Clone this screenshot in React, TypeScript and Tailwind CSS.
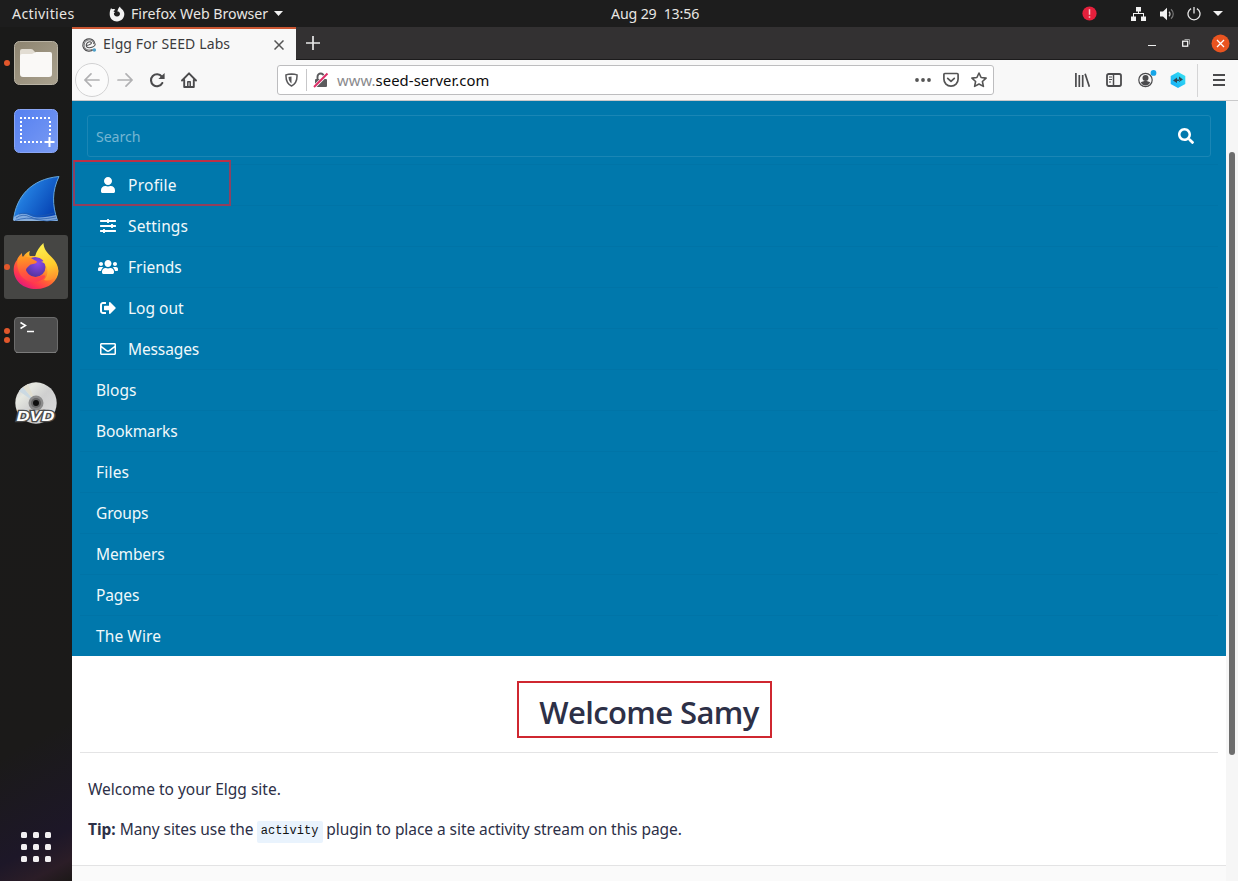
import type { ReactNode } from "react";
import { FaUser, FaSlidersH, FaUsers, FaSignOutAlt, FaRegEnvelope, FaSearch } from "react-icons/fa";

const menu: { label: string; icon?: ReactNode; spacing?: string }[] = [
  { label: "Profile", icon: <FaUser size={16} />, spacing: "tracking-[0.28px]" },
  { label: "Settings", icon: <FaSlidersH size={16} />, spacing: "tracking-[0.14px]" },
  { label: "Friends", icon: <FaUsers size={20} /> },
  { label: "Log out", icon: <FaSignOutAlt size={16} /> },
  { label: "Messages", icon: <FaRegEnvelope size={16} />, spacing: "tracking-[-0.12px]" },
  { label: "Blogs" },
  { label: "Bookmarks", spacing: "tracking-[-0.1px]" },
  { label: "Files", spacing: "tracking-[0.2px]" },
  { label: "Groups", spacing: "tracking-[-0.15px]" },
  { label: "Members", spacing: "tracking-[-0.12px]" },
  { label: "Pages", spacing: "tracking-[-0.1px]" },
  { label: "The Wire", spacing: "tracking-[0.1px]" },
];

function TopBar() {
  return (
    <header className="flex h-[27px] shrink-0 items-center bg-[#1d1d1d] text-[14.2px] text-[#e8e6e3]">
      <div className="w-[109px] shrink-0 pl-3 tracking-[0.35px]">Activities</div>
      <svg className="h-4 w-4 shrink-0" viewBox="0 0 16 16">
        <path
          fill="#f2f2f2"
          d="M2.1 2.1C2.5 2.5 2.8 3 3 3.3 3.700 2.900 4.600 2.900 5.300 3.100L6.400 3.900C5.500 4.300 4.800 4.700 4.400 5.300L6 6.200 4.900 7.200C4.700 8.900 6 10.400 7.900 10.500 10 10.600 11.300 9 10.900 7.300 10.600 6 9.500 5.400 8.400 5.500 8.700 3.600 9.500 1.500 11 .4 11.100 1.700 12 2.200 13 3.200 14.500 4.600 15.500 6.400 15.300 8.600 15 12.600 12 15.400 8 15.400 3.900 15.400.9 12.500.7 8.500.6 6.100 1.100 3.800 2.100 2.100Z"
        />
      </svg>
      <div className="w-[149px] shrink-0 pl-1.5 whitespace-nowrap">Firefox Web Browser</div>
      <svg className="h-[5px] w-[9px] shrink-0" viewBox="0 0 9 5">
        <path d="M0 0h9L4.500 5z" fill="#f2f2f2" />
      </svg>
      <div className="ml-[328px] w-[471px] shrink-0 tracking-[-0.15px] whitespace-pre">Aug 29  13:56</div>
      <svg className="h-[15px] w-[15px] shrink-0" viewBox="0 0 15 15">
        <circle cx="7.500" cy="7.500" r="7.100" fill="#e5203c" />
        <path d="M7.500 3.200v5.600M7.500 10.300v1.500" stroke="#fbc3cb" strokeWidth="1.500" />
      </svg>
      <svg className="ml-[34px] h-[14px] w-[15px] shrink-0" viewBox="0 0 15 14" fill="#f2f2f2">
        <path d="M5 0h5v4.500H8V6h5v3.500h2V14h-5V9.500h2V7H3v2.500h2V14H0V9.500h2V6h5V4.500H5z" />
      </svg>
      <svg className="ml-[14px] h-[14px] w-[15px] shrink-0" viewBox="0 0 15 14">
        <path d="M0 4.500h3L7 .8v12.400L3 9.500H0z" fill="#f2f2f2" />
        <path d="M9 4.700c1.300 1.200 1.300 3.400 0 4.600" fill="none" stroke="#ccc" strokeWidth="1.300" />
        <path d="M11 2.200c3 2.700 3 6.900 0 9.600" fill="none" stroke="#777" strokeWidth="1.200" />
      </svg>
      <svg className="ml-[12px] h-[14px] w-[14px] shrink-0" viewBox="0 0 14 14" fill="none" stroke="#e8e8e8" strokeWidth="1.300">
        <path d="M7 0v6.500M4.100 1.600a6 6 0 1 0 5.800 0" />
      </svg>
      <svg className="ml-[12px] h-[5px] w-[10px] shrink-0" viewBox="0 0 10 5">
        <path d="M0 0h10L5 5z" fill="#f2f2f2" />
      </svg>
    </header>
  );
}

function DockItem({ dots = 0, active = false, children }: { dots?: number; active?: boolean; children: ReactNode }) {
  return (
    <div className={active ? "relative flex h-16 w-16 items-center justify-center rounded-[3px] bg-[#464644]" : "relative flex h-16 w-16 items-center justify-center"}>
      {dots > 0 && (
        <div className="absolute inset-y-0 left-0 flex flex-col items-center justify-center gap-[3px]">
          {Array.from({ length: dots }, (_, i) => (
            <span key={i} className="h-1.5 w-1.5 rounded-full bg-[#e2572b]" />
          ))}
        </div>
      )}
      {children}
    </div>
  );
}

function Dock() {
  return (
    <aside className="flex w-[72px] shrink-0 flex-col items-center justify-between bg-[linear-gradient(152deg,#1a1a19_0%,#1b1a19_82%,#1d1728_94%,#2b1d27_97.500%,#1c1817_100%)] pt-1 pb-[19px]">
      <div className="flex flex-col gap-1">
        <DockItem dots={1}>
          <svg className="h-[44px] w-[44px]" viewBox="0 0 44 44">
            <defs>
              <linearGradient id="files" x1="0" y1="0" x2="1" y2="1">
                <stop offset="0" stopColor="#8d8470" />
                <stop offset="1" stopColor="#aaa28f" />
              </linearGradient>
            </defs>
            <rect x=".5" y=".5" width="43" height="43" rx="5" fill="url(#files)" stroke="#b9b3a4" />
            <path d="M6 10q0-2 2-2h9q2 0 3 2l2 2v8H6z" fill="#e2ddd3" />
            <path d="M6 15q0-2 2-2h10l4-2h14q2 0 2 2v20q0 3-3 3H9q-3 0-3-3z" fill="#faf9f7" />
          </svg>
        </DockItem>
        <DockItem>
          <svg className="h-[44px] w-[44px]" viewBox="0 0 44 44">
            <defs>
              <linearGradient id="shot" x1="0" y1="0" x2="1" y2="1">
                <stop offset="0" stopColor="#5580f1" />
                <stop offset="1" stopColor="#7a9bf3" />
              </linearGradient>
            </defs>
            <rect x=".5" y=".5" width="43" height="43" rx="5" fill="url(#shot)" stroke="#8aa6f4" />
            <path d="M6 9H37M7 12V33M36 12V26M6 33H30" fill="none" stroke="#fff" strokeWidth="2" strokeDasharray="2 2" />
            <path d="M35.500 28v10M30.500 33h10" stroke="#fff" strokeWidth="2" />
          </svg>
        </DockItem>
        <DockItem>
          <svg className="h-[48px] w-[48px]" viewBox="0 0 48 48">
            <defs>
              <linearGradient id="fin" x1="0" y1="0" x2="1" y2=".6">
                <stop offset="0" stopColor="#57b8f5" />
                <stop offset=".4" stopColor="#2079dc" />
                <stop offset="1" stopColor="#0744b4" />
              </linearGradient>
            </defs>
            <path d="M1.500 45C4 22 19 4 47 1.500 40 16 40 30 45.500 45.500z" fill="url(#fin)" stroke="#65a7dc" strokeWidth="1" />
            <path d="M2 42c6-4 10-4 17-1s15 1 25-1l1.500 6H1.500z" fill="#9bbbe3" opacity=".8" />
            <path d="M4 43q7-5 14-1t26 0M7 39q8-2 13 1t22-2M3 45.500q12-4 22-1t20 0" fill="none" stroke="#225aab" strokeWidth=".7" />
          </svg>
        </DockItem>
        <DockItem active dots={1}>
          <svg className="h-[48px] w-[48px]" viewBox="0 0 48 48">
            <defs>
              <linearGradient id="fxBody" x1=".85" y1=".1" x2=".2" y2=".95">
                <stop offset="0" stopColor="#fff04f" />
                <stop offset=".3" stopColor="#ffb52a" />
                <stop offset=".55" stopColor="#ff6a31" />
                <stop offset=".8" stopColor="#ff3550" />
                <stop offset="1" stopColor="#e0187e" />
              </linearGradient>
              <linearGradient id="fxFlame" x1=".5" y1="0" x2=".7" y2="1">
                <stop offset="0" stopColor="#fff04f" />
                <stop offset=".6" stopColor="#ffcb2c" />
                <stop offset="1" stopColor="#ff8d30" />
              </linearGradient>
              <linearGradient id="fxWrap" x1=".3" y1="0" x2=".4" y2="1">
                <stop offset="0" stopColor="#ff9a22" />
                <stop offset=".6" stopColor="#ff5a3c" />
                <stop offset="1" stopColor="#ff3a52" />
              </linearGradient>
              <radialGradient id="fxGlobe" cx=".6" cy=".3" r=".75">
                <stop offset="0" stopColor="#8b49ee" />
                <stop offset="1" stopColor="#503499" />
              </radialGradient>
            </defs>
            <path d="M5 17c1-3 3-5 5-7 0 2 0 3 1 4 2-3 4-5 7-6-1 2-1 4 0 5l16 0c6 3 12 8 12.500 15C46 38 37 46 24 46 11 46 2 38 1.700 27 1.500 23 3 19 5 17z" fill="url(#fxBody)" />
            <circle cx="23.500" cy="24" r="10" fill="url(#fxGlobe)" />
            <path d="M23 14C24 9 27 4 31.500 0c0 5 3 9 7 13 4 4 7.500 8 7.500 14-1 8-7 12-14 10 4-4 4.500-10 2-14-1-3-3-4-5-4l3-1c-2-3-5-4-9-4z" fill="url(#fxFlame)" />
            <path d="M6 15c4-2 9-1 13 0 3 2 6 3 6 4-2 3-6 1-8 4-3 2-4 5-2 7 2 4 8 6 13 3 3-1 6-1 5 1-7 9-24 6-27-8-1-4-1-7 0-11z" fill="url(#fxWrap)" />
          </svg>
        </DockItem>
        <DockItem dots={2}>
          <svg className="h-[36px] w-[44px]" viewBox="0 0 44 36">
            <rect x=".5" y=".5" width="43" height="35" rx="3.500" fill="#4d4d4d" stroke="#6c6c6c" />
            <path d="M2 35.500h40" stroke="#7b7b7b" />
            <path d="M6.500 5.500l5 3-5 3" fill="none" stroke="#fff" strokeWidth="1.500" />
            <path d="M13 14.500h7" stroke="#fff" strokeWidth="1.500" />
          </svg>
        </DockItem>
        <DockItem>
          <svg className="mt-0.5 h-[44px] w-[44px]" viewBox="0 0 44 44">
            <defs>
              <linearGradient id="disc" x1="0" y1="0" x2="1" y2="1">
                <stop offset="0" stopColor="#c9c6cb" />
                <stop offset=".25" stopColor="#e6e8e1" />
                <stop offset=".5" stopColor="#cfcfcf" />
                <stop offset="1" stopColor="#dedede" />
              </linearGradient>
            </defs>
            <circle cx="22" cy="21" r="20.700" fill="url(#disc)" />
            <path d="M22 21L5 9 9 5z" fill="#cbd9e2" />
            <path d="M22 21L9 5 14 2z" fill="#e2dfd0" />
            <circle cx="22" cy="21" r="7.500" fill="#8b8b8b" />
            <circle cx="22" cy="21" r="5" fill="#666" />
            <circle cx="22" cy="21" r="3" fill="#0e0e0e" />
            <text x="2.500" y="38.500" textLength="38" lengthAdjust="spacingAndGlyphs" fontFamily="Liberation Sans" fontWeight="700" fontStyle="italic" fontSize="14" fill="#fff" stroke="#4b4b4b" strokeWidth="2.500" paintOrder="stroke">DVD</text>
          </svg>
        </DockItem>
      </div>
      <div className="grid grid-cols-3 gap-1.5">
        {Array.from({ length: 9 }, (_, i) => (
          <span key={i} className="h-1.5 w-1.5 rounded-[1.500px] bg-[#f2f0f2]" />
        ))}
      </div>
    </aside>
  );
}

function TabStrip() {
  return (
    <div className="flex h-[33px] shrink-0 items-stretch bg-[#333132]">
      <div className="flex w-[224px] items-center border-t-2 border-[#cb5733] bg-[#f8f8f8] pl-[9px] text-[#3b3b3d]">
        <svg className="h-4 w-4 shrink-0" viewBox="0 0 16 16" fill="none" stroke="#4d4d4f" strokeWidth="1.100">
          <path d="M12.500 12.300A6.200 6.200 0 1 1 14.200 7.500C13.800 10 11 10.400 8.500 10.800 6 11 4.900 9.400 5.300 7.700 5.800 5.500 8 4.300 9.700 5 11.500 6 9.800 8 5.500 8.500" />
          <path d="M10.800 12.400C8 14 4 12.500 3.300 9.500 2.500 6 5 2.900 8.500 2.900c2.700 0 4.200 1.900 4.100 4.200" strokeWidth=".8" />
          <circle cx="13.300" cy="13" r="1.800" fill="#4ca0c9" stroke="none" />
        </svg>
        <span className="w-[177px] shrink-0 pb-[2px] pl-1.5 text-[14px] tracking-[0.12px] whitespace-nowrap">Elgg For SEED Labs</span>
        <svg className="h-[10px] w-[10px] shrink-0" viewBox="0 0 10 10" stroke="#555" strokeWidth="1.500">
          <path d="M.5.5l9 9M9.500.5l-9 9" />
        </svg>
      </div>
      <div className="flex grow items-center border-b border-[#1c1b1c] pl-[10px]">
        <svg className="h-[14px] w-[14px]" viewBox="0 0 14 14" stroke="#e8e8e8" strokeWidth="1.700">
          <path d="M7 0v14M0 7h14" />
        </svg>
      </div>
      <div className="flex items-center border-b border-[#1c1b1c] pr-2">
        <svg className="h-[10px] w-[8px]" viewBox="0 0 8 10">
          <path d="M0 7.500h8" stroke="#eee" />
        </svg>
        <svg className="ml-[26px] h-[8px] w-[8px]" viewBox="0 0 8 8" fill="none">
          <path d="M2.500.5h5v5" stroke="#a0a0a0" />
          <rect x=".7" y="2.200" width="5" height="5" stroke="#fff" strokeWidth="1.200" />
        </svg>
        <svg className="ml-[21px] h-[19px] w-[19px]" viewBox="0 0 19 19">
          <circle cx="9.500" cy="9.500" r="9" fill="#e95420" />
          <path d="M6 6l7 7M13 6l-7 7" stroke="#fff" strokeWidth="1.300" />
        </svg>
      </div>
    </div>
  );
}

function Toolbar() {
  return (
    <div className="flex h-[41px] shrink-0 items-center border-b border-[#c9c9ca] bg-[#f8f8f8] pl-[3px]">
      <div className="flex h-[34px] w-[34px] items-center justify-center rounded-full border border-[#d2d2d3] bg-[#fbfbfb]">
        <svg className="h-4 w-4" viewBox="0 0 16 16" fill="none" stroke="#b1b1b3" strokeWidth="1.700" strokeLinecap="round" strokeLinejoin="round">
          <path d="M15 8H1M7 1.800L.9 8 7 14.200" />
        </svg>
      </div>
      <svg className="ml-2 h-4 w-4" viewBox="0 0 16 16" fill="none" stroke="#b1b1b3" strokeWidth="1.700" strokeLinecap="round" strokeLinejoin="round">
        <path d="M1 8h14M9 1.800L15.100 8 9 14.200" />
      </svg>
      <svg className="ml-4 h-4 w-4" viewBox="0 0 16 16">
        <path d="M12.800 4.600A6 6 0 1 0 13.300 11" fill="none" stroke="#4b4b4d" strokeWidth="2.100" strokeLinecap="round" />
        <path d="M15.600.9v6.200H9.400z" fill="#4b4b4d" />
      </svg>
      <svg className="ml-4 h-4 w-4" viewBox="0 0 16 16" fill="none" stroke="#4b4b4d" strokeWidth="1.900" strokeLinecap="round" strokeLinejoin="round">
        <path d="M1 8.500L8 1.300l7 7.200M3.200 8v7h9.600V8" />
        <path d="M6.800 14.500v-4.800h2.400v4.800" strokeWidth="1.500" />
      </svg>
      <div className="ml-[80px] flex h-[30px] w-[717px] items-center rounded-[3px] border border-[#bdbdbf] bg-white">
        <svg className="ml-[7px] h-[14px] w-[13px]" viewBox="0 0 13 14">
          <path d="M6.500 1C8.500 1.100 10.500 1.400 12 1.900 12.300 7.400 10.500 11 6.500 13 2.500 11 .7 7.400 1 1.900 2.500 1.400 4.500 1.100 6.500 1z" fill="none" stroke="#58585a" strokeWidth="1.500" />
          <path d="M6.500 3.500v7C4.600 9 3.600 7 3.500 4z" fill="#58585a" />
        </svg>
        <div className="ml-2 h-[22px] w-px bg-[#c7c7c9]" />
        <svg className="ml-1.5 h-4 w-4" viewBox="0 0 16 16">
          <path d="M4.500 7V4.700a3.200 3.200 0 0 1 6.400 0V7" fill="none" stroke="#5b5b5d" strokeWidth="1.900" />
          <rect x="2" y="7" width="12" height="8" rx="1" fill="#5b5b5d" />
          <path d="M.7 15.500L14.800 1.400" stroke="#fff" strokeWidth="3.400" />
          <path d="M1 15L14.500 1.500" stroke="#dc2e67" strokeWidth="2" />
        </svg>
        <span className="ml-2 grow text-[14.800px] tracking-[0.08px] text-[#0c0c0d]">
          <span className="text-[#8a8a8d]">www.</span>seed-server.com
        </span>
        <svg className="h-4 w-4" viewBox="0 0 16 16" fill="#555">
          <circle cx="2" cy="8" r="1.900" />
          <circle cx="8" cy="8" r="1.900" />
          <circle cx="14" cy="8" r="1.900" />
        </svg>
        <svg className="ml-3 h-4 w-4" viewBox="0 0 16 16" fill="none" stroke="#555" strokeWidth="1.700" strokeLinejoin="round" strokeLinecap="round">
          <path d="M1.900 1.500h12.200q1 0 1 1V7c0 4-3.100 7.100-7.100 7.100S.9 11 .9 7V2.500q0-1 1-1z" />
          <path d="M4.700 6.300L8 9.400l3.300-3.100" />
        </svg>
        <svg className="mr-[6px] ml-3 h-4 w-4" viewBox="0 0 16 16" fill="none" stroke="#555" strokeWidth="1.600" strokeLinejoin="round">
          <path d="M8 1l2.100 4.500 5 .6-3.700 3.400 1 4.900L8 12l-4.400 2.400 1-4.900L.9 6.100l5-.6z" />
        </svg>
      </div>
      <svg className="ml-[81px] h-[14px] w-[15px]" viewBox="0 0 15 14" stroke="#4b4b4d" strokeWidth="1.700">
        <path d="M.9 0v14M4.300 2v12M7.700 2v12M10.100.8l4.300 13" />
      </svg>
      <svg className="ml-4 h-[14px] w-4" viewBox="0 0 16 14" fill="none" stroke="#4b4b4d">
        <rect x="1" y="1" width="14" height="12" rx="1.700" strokeWidth="1.800" />
        <path d="M7.500 1v12" strokeWidth="1.500" />
        <path d="M3 4h3M3 6.500h3M3 9h2" strokeWidth="1" />
      </svg>
      <svg className="ml-[15px] h-5 w-5" viewBox="0 0 20 20">
        <circle cx="8.500" cy="10" r="6.700" fill="none" stroke="#4b4b4d" strokeWidth="1.200" />
        <circle cx="8.500" cy="8" r="3" fill="#4b4b4d" />
        <path d="M3.800 12.500c2.500-2 7-2 9.400 0-2 4-7.500 4-9.400 0z" fill="#4b4b4d" />
        <circle cx="16.500" cy="2.900" r="2.900" fill="#17a6e8" />
      </svg>
      <svg className="ml-[13px] h-4 w-4" viewBox="0 0 16 16">
        <defs>
          <linearGradient id="hex" x1="0" y1="1" x2="1" y2="0">
            <stop offset="0" stopColor="#14a9f7" />
            <stop offset="1" stopColor="#38e5f2" />
          </linearGradient>
        </defs>
        <path d="M8 0l7.300 4v8L8 16 .7 12V4z" fill="url(#hex)" />
        <path d="M3 8.500L7 5.500v5.500zM13 7.500L9 4.500V10zM6.500 7.500h3v1.500h-3z" fill="#2f4553" />
      </svg>
      <div className="ml-[11px] h-[33px] w-px bg-[#d5d5d6]" />
      <svg className="ml-[15px] h-3 w-3" viewBox="0 0 12 12" stroke="#4b4b4d" strokeWidth="2">
        <path d="M0 1h12M0 6h12M0 11h12" />
      </svg>
    </div>
  );
}

function SiteMenu() {
  return (
    <nav className="relative h-[555px] shrink-0 bg-[#0078ac] pt-[14px] text-[15.500px] text-[#f1f8fb]">
      <div className="mr-[15px] mb-[7px] ml-[15px] flex h-[42px] items-center justify-between rounded-[3px] border border-[#1a86b5] pr-4 pl-2">
        <span className="pt-0.5 text-[14.200px] tracking-[-0.1px] text-[#74b5d2]">Search</span>
        <FaSearch size={16} color="#fff" />
      </div>
      <ul>
        {menu.map(({ label, icon, spacing }) => (
          <li key={label} className="mx-2 flex h-[41px] items-center border-t border-[#0074a7] pl-4">
            {icon && <span className="mr-2 flex w-6 justify-center text-white">{icon}</span>}
            <span className={spacing ? `pt-0.5 ${spacing}` : "pt-0.5"}>{label}</span>
          </li>
        ))}
      </ul>
      <div className="absolute top-[59px] left-px h-[46px] w-[158px] border-2 border-x-[#8c4262] border-t-[#bb3047] border-b-[#923f5c]" />
    </nav>
  );
}

function WelcomePage() {
  return (
    <main className="flex grow flex-col bg-white text-[15.500px] text-[#2d3047]">
      <div className="mx-2 flex h-[97px] shrink-0 items-start justify-center border-b border-[#e4e4e5] pt-[25px] pr-[9px]">
        <h1 className="flex h-[57px] w-[255px] items-center justify-center border-2 border-[#cf2730] pt-[6px] pl-[9px] font-['Open_Sans'] text-[31px] font-semibold tracking-[-0.6px] whitespace-nowrap">
          Welcome Samy
        </h1>
      </div>
      <div className="flex h-[113px] shrink-0 flex-col gap-4 border-b border-[#e3e3e4] px-4 pt-6">
        <p className="h-6 leading-6">Welcome to your Elgg site.</p>
        <p className="flex h-6 items-center leading-6 whitespace-pre">
          <b>Tip:</b>
          <span className="w-[141px] tracking-[-0.08px]"> Many sites use the </span>
          <code className="mt-[5px] mr-[3.500px] h-[22px] w-[66px] rounded-[2px] bg-[#e9f3fd] px-1 font-['Liberation_Mono'] text-[12px] leading-[21px] text-[#111]">activity</code>
          <span className="tracking-[-0.06px]">plugin to place a site activity stream on this page.</span>
        </p>
      </div>
      <div className="grow bg-[#fafafa]" />
    </main>
  );
}

export default function App() {
  return (
    <div className="flex h-[881px] w-[1238px] flex-col overflow-hidden font-['Noto_Sans',sans-serif]">
      <TopBar />
      <div className="flex min-h-0 grow">
        <Dock />
        <div className="flex min-w-0 grow flex-col">
          <TabStrip />
          <Toolbar />
          <div className="flex min-h-0 grow">
            <div className="flex min-w-0 grow flex-col">
              <SiteMenu />
              <WelcomePage />
            </div>
            <div className="w-3 shrink-0 bg-[#f6f6f6] pt-[51px] pl-[3px]">
              <div className="h-[603px] w-1.5 rounded-full bg-[#6d6d6d]" />
            </div>
          </div>
        </div>
      </div>
    </div>
  );
}
